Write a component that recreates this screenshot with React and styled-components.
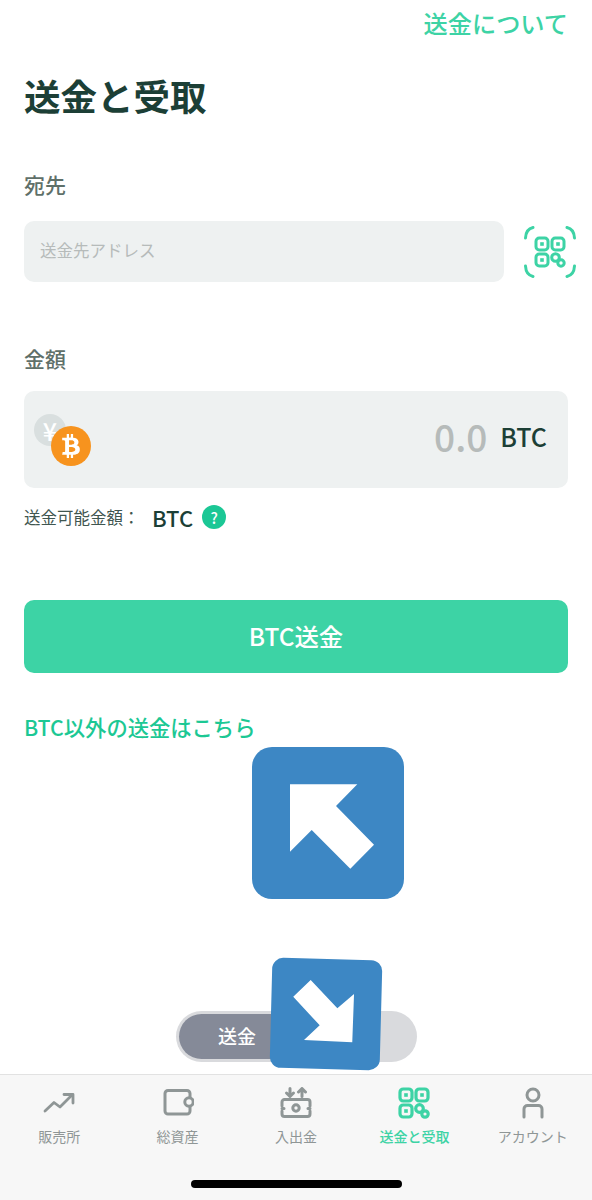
import React from "react";
import styled, { createGlobalStyle } from "styled-components";
import { FaBtc } from "react-icons/fa";

const GlobalStyle = createGlobalStyle`
    * {
        box-sizing: border-box;
    }
    html, body {
        margin: 0;
        padding: 0;
        background: #fff;
        font-family: "Noto Sans CJK JP", "Noto Sans", sans-serif;
    }
`;

const QrCells = ({ strokeWidth = 3 }) => (
    <g fill="none" strokeWidth={strokeWidth}>
        <rect x="2" y="2" width="12" height="12" rx="3.2" />
        <rect x="18" y="2" width="12" height="12" rx="3.2" />
        <rect x="2" y="18" width="12" height="12" rx="3.2" />
        <circle cx="21.5" cy="21.5" r="3.8" />
        <circle cx="27" cy="27" r="3.2" />
        <rect x="6.2" y="6.2" width="3.6" height="3.6" fill="currentColor" stroke="none" />
        <rect x="22.2" y="6.2" width="3.6" height="3.6" fill="currentColor" stroke="none" />
        <rect x="6.2" y="22.2" width="3.6" height="3.6" fill="currentColor" stroke="none" />
    </g>
);

const TrendIcon = () => (
    <svg width="32" height="32" viewBox="0 0 32 32" fill="none" stroke="currentColor" strokeWidth="2.8" strokeLinecap="round" strokeLinejoin="round">
        <path d="M2 24 L11 15.5 L17 20 L29 8" />
        <path d="M21 7.5 H30 V16" />
    </svg>
);

const WalletIcon = () => (
    <svg width="32" height="32" viewBox="0 0 32 32" fill="none" stroke="currentColor" strokeWidth="3" strokeLinecap="round" strokeLinejoin="round">
        <path d="M28 10 V6.5 a3 3 0 0 0 -3 -3 H6 a3 3 0 0 0 -3 3 V24 a3 3 0 0 0 3 3 H25 a3 3 0 0 0 3 -3 V20" />
        <circle cx="27" cy="15" r="4.2" />
    </svg>
);

const CashIcon = () => (
    <svg width="32" height="32" viewBox="0 0 32 32" fill="none" stroke="currentColor" strokeWidth="3" strokeLinecap="round" strokeLinejoin="round">
        <path d="M10 1.5 V9 M6.5 6 L10 9.5 L13.5 6" />
        <path d="M22 9.5 V2 M18.5 5 L22 1.5 L25.5 5" />
        <path d="M2 19 V15 a2.5 2.5 0 0 1 2.5 -2.5 H27.5 a2.5 2.5 0 0 1 2.5 2.5 V19" />
        <path d="M2 24 V27 a2.5 2.5 0 0 0 2.5 2.5 H27.5 a2.5 2.5 0 0 0 2.5 -2.5 V24" />
        <path d="M2 21.5 H4 M28 21.5 H30" />
        <circle cx="16" cy="21" r="3.2" />
    </svg>
);

const PersonIcon = () => (
    <svg width="32" height="32" viewBox="0 0 32 32" fill="none" stroke="currentColor" strokeWidth="3" strokeLinecap="round" strokeLinejoin="round">
        <circle cx="16" cy="8" r="6" />
        <path d="M7 30 V22 a3.5 3.5 0 0 1 3.5 -3.5 H21.5 a3.5 3.5 0 0 1 3.5 3.5 V30" />
    </svg>
);

const QrTabIcon = () => (
    <svg width="32" height="32" viewBox="0 0 32 32" stroke="currentColor">
        <QrCells strokeWidth={3.2} />
    </svg>
);

const ScanIcon = () => (
    <svg width="52" height="52" viewBox="0 0 52 52" stroke="currentColor">
        <g fill="none" strokeWidth="3" strokeLinecap="round">
            <path d="M1.5 12 Q2 3 9 1.5" />
            <path d="M43 1.5 Q50 3 50.5 12" />
            <path d="M1.5 40 Q2 49 9 50.5" />
            <path d="M43 50.5 Q50 49 50.5 40" />
        </g>
        <g transform="translate(10 10)">
            <QrCells strokeWidth={3} />
        </g>
    </svg>
);

const TABS = [
    { label: "販売所", icon: <TrendIcon /> },
    { label: "総資産", icon: <WalletIcon /> },
    { label: "入出金", icon: <CashIcon /> },
    { label: "送金と受取", icon: <QrTabIcon />, active: true },
    { label: "アカウント", icon: <PersonIcon /> },
];

export default function App() {
    return (
        <Page>
            <GlobalStyle />
            <Main>
                <TopLink>送金について</TopLink>
                <Title>送金と受取</Title>

                <FieldLabel>宛先</FieldLabel>
                <AddressRow>
                    <AddressInput>送金先アドレス</AddressInput>
                    <ScanButton><ScanIcon /></ScanButton>
                </AddressRow>

                <AmountLabel>金額</AmountLabel>
                <AmountBox>
                    <Coins>
                        <YenCoin>¥</YenCoin>
                        <BtcCoin><FaBtc /></BtcCoin>
                    </Coins>
                    <AmountValue>0.0</AmountValue>
                    <AmountUnit>BTC</AmountUnit>
                </AmountBox>

                <Available>
                    <AvailableLabel>送金可能金額：</AvailableLabel>
                    <AvailableUnit>BTC</AvailableUnit>
                    <HelpBadge>?</HelpBadge>
                </Available>

                <SendButton>BTC送金</SendButton>
                <OtherLink>BTC以外の送金はこちら</OtherLink>

                <BigArrow>
                    <svg width="152" height="152" viewBox="0 0 152 152">
                        <polygon fill="#fff" points="38,37.3 105.3,37.3 84,59 122,97.7 98.3,121.7 59.7,83 38,104.7" />
                    </svg>
                </BigArrow>

                <Slider>
                    <SliderThumb>送金</SliderThumb>
                    <SmallArrow>
                        <svg width="110" height="110" viewBox="0 0 110 110">
                            <polygon fill="#fff" points="38.8,21.4 66.2,49 82.5,34.3 82,82.6 33.7,81.6 49,66.5 21.8,38.6" />
                        </svg>
                    </SmallArrow>
                </Slider>
            </Main>

            <TabBar>
                <TabRow>
                    {TABS.map((tab) => (
                        <Tab key={tab.label} $active={tab.active}>
                            <TabIcon>{tab.icon}</TabIcon>
                            <TabLabel $active={tab.active}>{tab.label}</TabLabel>
                        </Tab>
                    ))}
                </TabRow>
                <HomeIndicator />
            </TabBar>
        </Page>
    );
}

const Page = styled.div`
    width: 592px;
    height: 1200px;
    display: flex;
    flex-direction: column;
    overflow: hidden;
    background: #fff;
`;

const Main = styled.main`
    position: relative;
    flex: 1;
    display: flex;
    flex-direction: column;
    padding: 0 24px;
`;

const TopLink = styled.div`
    align-self: flex-end;
    margin-top: 6px;
    font-size: 24.2px;
    line-height: 34px;
    font-weight: 500;
    color: #3dd3a5;
`;

const Title = styled.h1`
    margin: 29px 0 0;
    font-size: 36.5px;
    line-height: 54px;
    font-weight: 700;
    color: #1c3f36;
`;

const FieldLabel = styled.div`
    margin-top: 45px;
    font-size: 21px;
    line-height: 32px;
    font-weight: 500;
    color: #5f7069;
`;

const AmountLabel = styled(FieldLabel)`
    margin-top: 60px;
`;

const AddressRow = styled.div`
    display: flex;
    align-items: center;
    margin-top: 21px;
`;

const AddressInput = styled.div`
    width: 480px;
    height: 61px;
    display: flex;
    align-items: center;
    padding-left: 16px;
    padding-bottom: 4px;
    border-radius: 10px;
    background: #eef1f1;
    font-size: 16.5px;
    color: #b6bbba;
`;

const ScanButton = styled.div`
    display: flex;
    margin-left: 20px;
    margin-right: -28px;
    color: #3dd3a5;
`;

const AmountBox = styled.div`
    display: flex;
    align-items: center;
    height: 97px;
    margin-top: 17px;
    padding: 0 21px 6px 10px;
    border-radius: 10px;
    background: #eef1f1;
`;

const Coins = styled.div`
    position: relative;
    width: 57px;
    height: 57px;
    margin-right: auto;
    margin-top: 12px;
`;

const YenCoin = styled.div`
    width: 32px;
    height: 32px;
    display: flex;
    align-items: center;
    justify-content: center;
    border-radius: 50%;
    background: #d9dfdf;
    color: #fff;
    font-size: 25px;
    font-weight: 500;
    line-height: 1;
`;

const BtcCoin = styled.div`
    position: absolute;
    left: 17px;
    top: 12px;
    width: 40px;
    height: 40px;
    display: flex;
    align-items: center;
    justify-content: center;
    border-radius: 50%;
    background: #f7931e;
    color: #fff;
    font-size: 24px;
`;

const AmountValue = styled.div`
    font-size: 37px;
    line-height: 1;
    font-weight: 500;
    color: #b6bbba;
`;

const AmountUnit = styled.div`
    margin-left: 13px;
    font-size: 25px;
    line-height: 1;
    font-weight: 500;
    color: #1c3f36;
`;

const Available = styled.div`
    display: flex;
    align-items: center;
    margin-top: 12px;
    height: 34px;
`;

const AvailableLabel = styled.div`
    width: 128px;
    font-size: 16.5px;
    color: #3f5650;
`;

const AvailableUnit = styled.div`
    font-size: 22px;
    font-weight: 500;
    color: #1c3f36;
`;

const HelpBadge = styled.div`
    width: 24px;
    height: 24px;
    margin-left: 9px;
    display: flex;
    align-items: center;
    justify-content: center;
    border-radius: 50%;
    background: #1bc795;
    color: #fff;
    font-size: 15px;
    font-weight: 500;
`;

const SendButton = styled.div`
    height: 73px;
    margin-top: 66px;
    padding-bottom: 3px;
    display: flex;
    align-items: center;
    justify-content: center;
    border-radius: 10px;
    background: #3dd3a5;
    color: #fff;
    font-size: 24.4px;
    font-weight: 500;
`;

const OtherLink = styled.div`
    margin-top: 39px;
    font-size: 21.3px;
    line-height: 30px;
    font-weight: 500;
    color: #1cc894;
`;

const BigArrow = styled.div`
    position: absolute;
    left: 252px;
    top: 747px;
    width: 152px;
    height: 152px;
    border-radius: 20px;
    background: #3d87c4;
    svg {
        display: block;
    }
`;

const Slider = styled.div`
    position: relative;
    width: 241px;
    height: 51px;
    margin-top: auto;
    margin-bottom: 12px;
    margin-left: 152px;
    padding: 3px;
    border-radius: 26px;
    background: #d9dadd;
`;

const SliderThumb = styled.div`
    width: 110px;
    height: 45px;
    display: flex;
    align-items: center;
    padding-left: 39px;
    padding-bottom: 2px;
    border-radius: 23px 0 0 23px;
    background: #858a98;
    color: #fff;
    font-size: 19px;
    font-weight: 500;
`;

const SmallArrow = styled.div`
    position: absolute;
    left: 95px;
    top: -52px;
    width: 110px;
    height: 110px;
    border-radius: 11px;
    background: #3d87c4;
    transform: rotate(1.5deg);
    svg {
        display: block;
    }
`;

const TabBar = styled.nav`
    height: 126px;
    border-top: 1px solid #e2e2e2;
    background: #f7f7f7;
    display: flex;
    flex-direction: column;
    align-items: center;
`;

const TabRow = styled.div`
    width: 100%;
    display: grid;
    grid-template-columns: repeat(5, 1fr);
    padding-top: 12px;
`;

const Tab = styled.div`
    display: flex;
    flex-direction: column;
    align-items: center;
    color: ${(p) => (p.$active ? "#3dd3a5" : "#8f9696")};
`;

const TabIcon = styled.div`
    height: 32px;
    svg {
        display: block;
    }
`;

const TabLabel = styled.div`
    margin-top: 6px;
    font-size: 14px;
    line-height: 22px;
    font-weight: ${(p) => (p.$active ? 500 : 400)};
`;

const HomeIndicator = styled.div`
    width: 211px;
    height: 8px;
    margin-top: 33px;
    border-radius: 4px;
    background: #000;
`;
